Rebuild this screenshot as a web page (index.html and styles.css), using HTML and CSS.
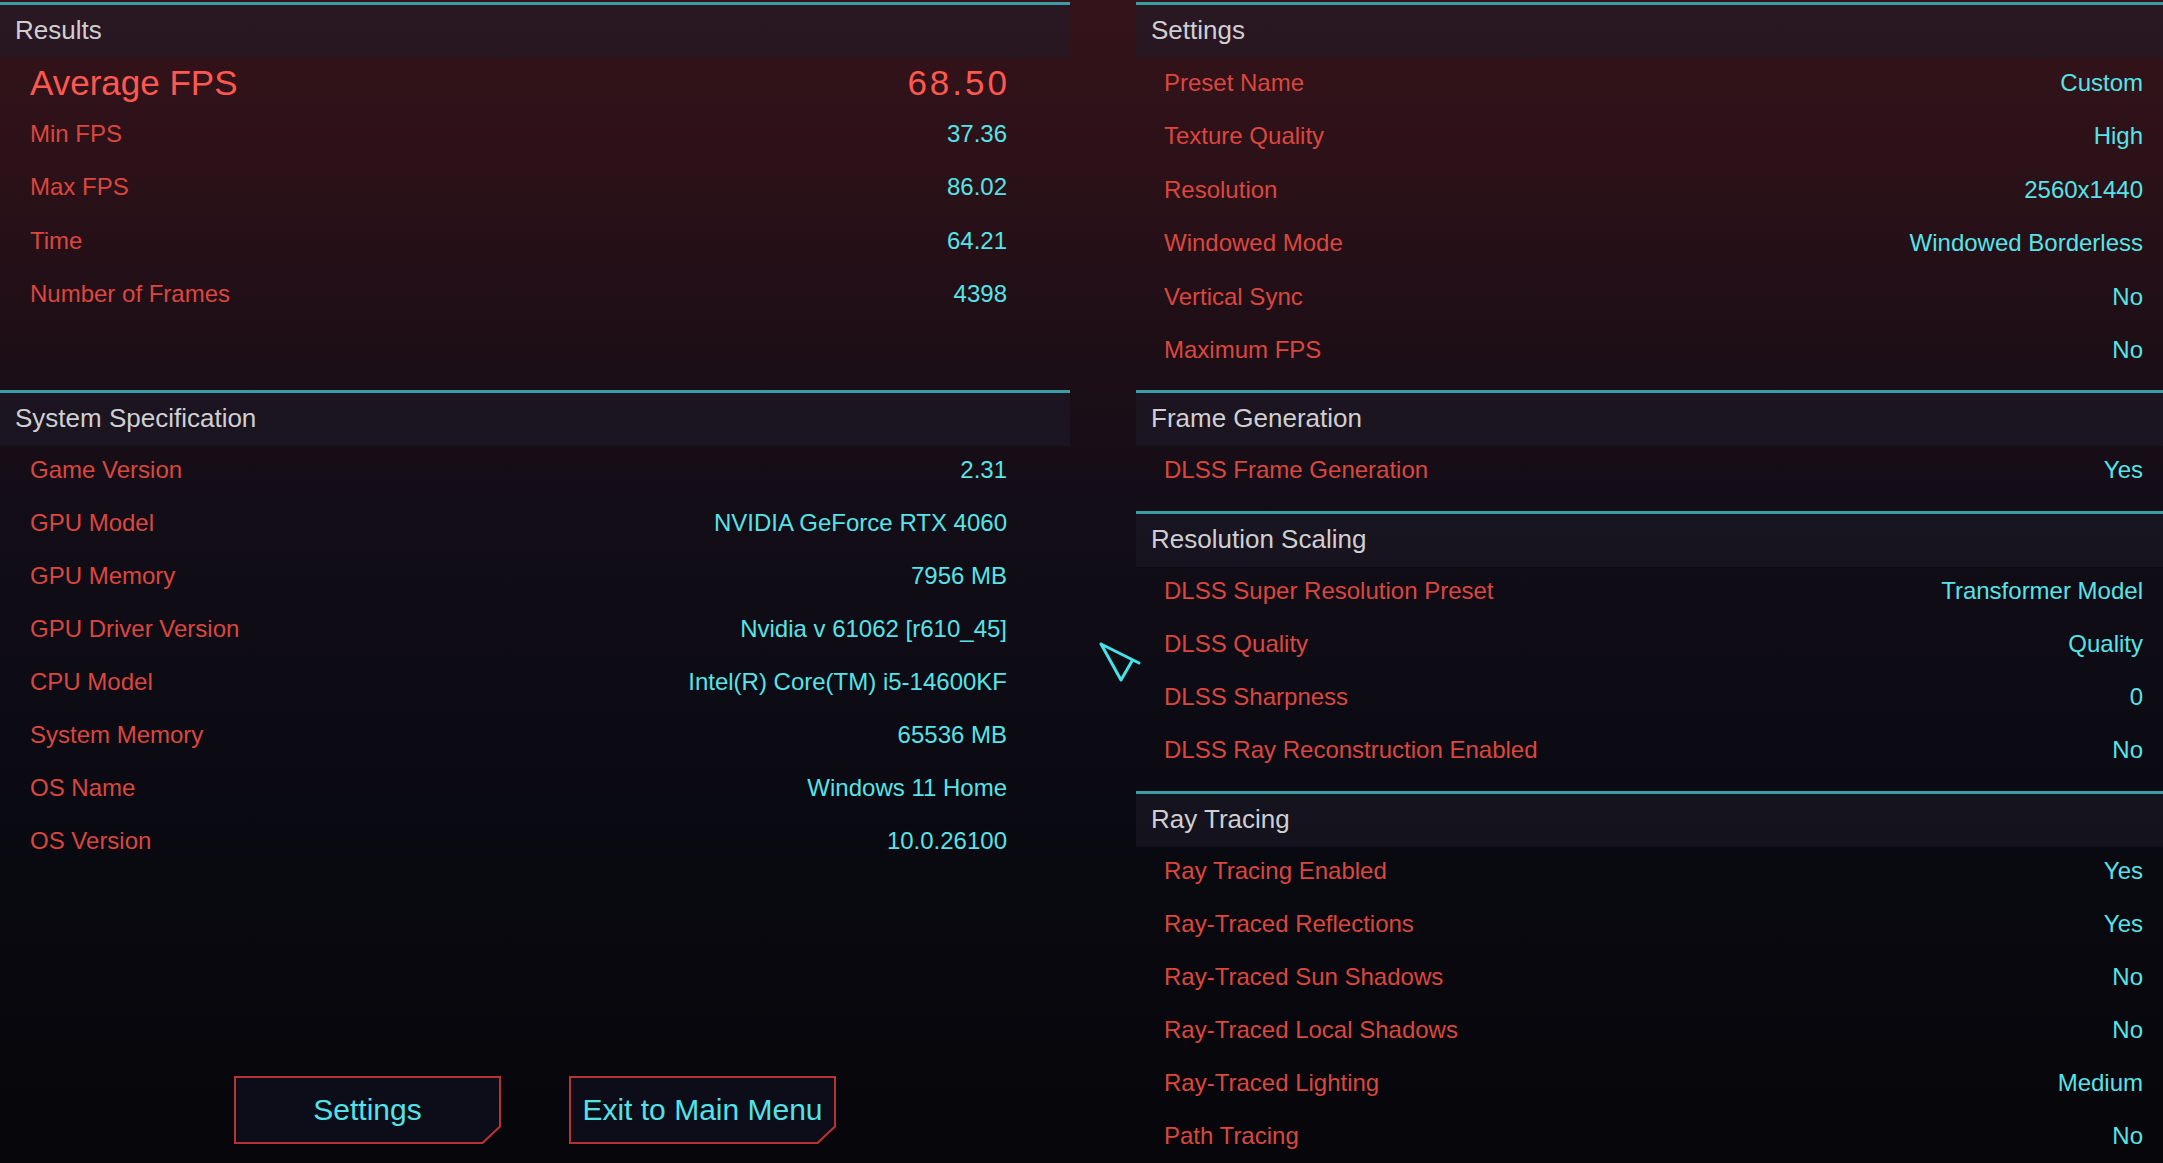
FILE: index.html
```html
<!DOCTYPE html>
<html lang="en">
<head>
    <meta charset="UTF-8">
    <meta name="viewport" content="width=device-width, initial-scale=1.0">
    <title>Benchmark Results</title>
    <link rel="stylesheet" href="styles.css">
</head>
<body>

    <div class="screen">
        <!-- left column: results + system spec + buttons -->
        <div class="column column-left">
            <section class="panel panel-top">
                <h2 class="panel-head">Results</h2>
                <div class="row row-main">
                    <span class="label">Average FPS</span>
                    <span class="value">68.50</span>
                </div>
                <div class="row"><span class="label">Min FPS</span><span class="value">37.36</span></div>
                <div class="row"><span class="label">Max FPS</span><span class="value">86.02</span></div>
                <div class="row"><span class="label">Time</span><span class="value">64.21</span></div>
                <div class="row"><span class="label">Number of Frames</span><span class="value">4398</span></div>
            </section>

            <section class="panel">
                <h2 class="panel-head">System Specification</h2>
                <div class="row"><span class="label">Game Version</span><span class="value">2.31</span></div>
                <div class="row"><span class="label">GPU Model</span><span class="value">NVIDIA GeForce RTX 4060</span></div>
                <div class="row"><span class="label">GPU Memory</span><span class="value">7956 MB</span></div>
                <div class="row"><span class="label">GPU Driver Version</span><span class="value">Nvidia v 61062 [r610_45]</span></div>
                <div class="row"><span class="label">CPU Model</span><span class="value">Intel(R) Core(TM) i5-14600KF</span></div>
                <div class="row"><span class="label">System Memory</span><span class="value">65536 MB</span></div>
                <div class="row"><span class="label">OS Name</span><span class="value">Windows 11 Home</span></div>
                <div class="row"><span class="label">OS Version</span><span class="value">10.0.26100</span></div>
            </section>

            <div class="actions">
                <button type="button" class="cut-btn">Settings</button>
                <button type="button" class="cut-btn">Exit to Main Menu</button>
            </div>
        </div>

        <!-- right column: graphics settings -->
        <div class="column column-right">
            <section class="panel panel-top">
                <h2 class="panel-head">Settings</h2>
                <div class="row"><span class="label">Preset Name</span><span class="value">Custom</span></div>
                <div class="row"><span class="label">Texture Quality</span><span class="value">High</span></div>
                <div class="row"><span class="label">Resolution</span><span class="value">2560x1440</span></div>
                <div class="row"><span class="label">Windowed Mode</span><span class="value">Windowed Borderless</span></div>
                <div class="row"><span class="label">Vertical Sync</span><span class="value">No</span></div>
                <div class="row"><span class="label">Maximum FPS</span><span class="value">No</span></div>
            </section>

            <section class="panel">
                <h2 class="panel-head">Frame Generation</h2>
                <div class="row"><span class="label">DLSS Frame Generation</span><span class="value">Yes</span></div>
            </section>

            <section class="panel">
                <h2 class="panel-head">Resolution Scaling</h2>
                <div class="row"><span class="label">DLSS Super Resolution Preset</span><span class="value">Transformer Model</span></div>
                <div class="row"><span class="label">DLSS Quality</span><span class="value">Quality</span></div>
                <div class="row"><span class="label">DLSS Sharpness</span><span class="value">0</span></div>
                <div class="row"><span class="label">DLSS Ray Reconstruction Enabled</span><span class="value">No</span></div>
            </section>

            <section class="panel">
                <h2 class="panel-head">Ray Tracing</h2>
                <div class="row"><span class="label">Ray Tracing Enabled</span><span class="value">Yes</span></div>
                <div class="row"><span class="label">Ray-Traced Reflections</span><span class="value">Yes</span></div>
                <div class="row"><span class="label">Ray-Traced Sun Shadows</span><span class="value">No</span></div>
                <div class="row"><span class="label">Ray-Traced Local Shadows</span><span class="value">No</span></div>
                <div class="row"><span class="label">Ray-Traced Lighting</span><span class="value">Medium</span></div>
                <div class="row"><span class="label">Path Tracing</span><span class="value">No</span></div>
            </section>
        </div>
    </div>

    <!-- mouse pointer -->
    <svg class="pointer" width="48" height="48" viewBox="0 0 48 48">
        <path d="M4 4 L42 23 M4 4 L24 40 L35 21" fill="none" stroke="#45e2e8" stroke-width="3" stroke-linecap="round" stroke-linejoin="round"/>
    </svg>

</body>
</html>
```

FILE: styles.css
```css
html, body {
    margin: 0;
    height: 100%;
}

body {
    font-family: "Liberation Sans", Arial, sans-serif;
    overflow: hidden;
    /* red glow at the top, fading into near black */
    background: linear-gradient(180deg, #35131a 0%, #2c1118 14%, #1d0e16 30%, #120d17 45%, #0c0b14 62%, #08080e 82%, #06060b 100%);
}

.screen {
    display: grid;
    grid-template-columns: 1070px 1fr;
    grid-template-rows: 100%; /* keep both columns at screen height */
    column-gap: 66px;
    height: 100%;
    padding-top: 2px;
    box-sizing: border-box;
}

.column {
    display: flex;
    flex-direction: column;
    min-height: 0;
}

.panel {
    border-top: 3px solid #3c9ea5;
    padding-bottom: 12px;
    flex-shrink: 0;
}

.panel-top {
    height: 388px;
    box-sizing: border-box;
}

.panel-head {
    margin: 0;
    height: 53px;
    line-height: 50px;
    padding-left: 15px;
    font-size: 26px;
    font-weight: normal;
    color: #cfcfd2;
    background: rgba(30, 28, 42, 0.5);
}

.row {
    display: flex;
    justify-content: space-between;
    align-items: baseline;
    height: 53px;
    line-height: 47px;
    font-size: 24px;
}

/* the two top panels have slightly taller rows */
.panel-top .row {
    height: 53.4px;
    line-height: 50px;
}

.column-left .row {
    padding: 0 63px 0 30px;
}

.column-right .row {
    padding: 0 20px 0 28px;
}

.label {
    color: #dc463e;
}

.value {
    color: #56e4e8;
}

.panel-top .row-main {
    height: 51px;
    line-height: 50px;
    font-size: 35px;
}

.row-main .label,
.row-main .value {
    color: #ff5850;
}

.row-main .value {
    letter-spacing: 3px;
    margin-right: -3px;
}

/* bottom buttons */
.actions {
    margin-top: auto;
    margin-bottom: 19px;
    display: flex;
    justify-content: center;
    gap: 68px;
}

.cut-btn {
    position: relative;
    isolation: isolate;
    width: 267px;
    height: 68px;
    border: none;
    padding: 0;
    font-family: inherit;
    font-size: 30px;
    color: #52e3e8;
    background: #b8322f;
    clip-path: polygon(0 0, 100% 0, 100% calc(100% - 17px), calc(100% - 18px) 100%, 0 100%);
    cursor: pointer;
}

.cut-btn::before {
    content: "";
    position: absolute;
    inset: 2px;
    background: #0c0d18;
    clip-path: polygon(0 0, 100% 0, 100% calc(100% - 16px), calc(100% - 17px) 100%, 0 100%);
    z-index: -1;
}

.pointer {
    position: absolute;
    left: 1097px;
    top: 640px;
}
```
